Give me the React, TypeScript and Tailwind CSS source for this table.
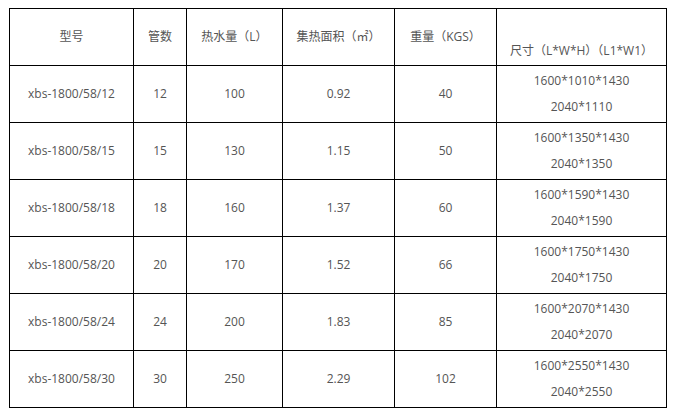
import React from "react";

const headers = ["型号", "管数", "热水量（L）", "集热面积（㎡）", "重量（KGS）", "尺寸（L*W*H）（L1*W1）"];

const rows: [string, string, string, string, string, string, string][] = [
  ["xbs-1800/58/12", "12", "100", "0.92", "40", "1600*1010*1430", "2040*1110"],
  ["xbs-1800/58/15", "15", "130", "1.15", "50", "1600*1350*1430", "2040*1350"],
  ["xbs-1800/58/18", "18", "160", "1.37", "60", "1600*1590*1430", "2040*1590"],
  ["xbs-1800/58/20", "20", "170", "1.52", "66", "1600*1750*1430", "2040*1750"],
  ["xbs-1800/58/24", "24", "200", "1.83", "85", "1600*2070*1430", "2040*2070"],
  ["xbs-1800/58/30", "30", "250", "2.29", "102", "1600*2550*1430", "2040*2550"],
];

const cell =
  "h-[57px] border-r border-b border-black flex items-center justify-center text-center";

export default function App() {
  return (
    <div
      className="w-[673px] h-[412px] bg-white pt-[8px] pl-[9px] text-[12px] text-[#555]"
      style={{ fontFamily: '"Open Sans", "Noto Sans CJK SC", sans-serif' }}
    >
      <div className="grid grid-cols-[124px_53px_96px_112px_102px_170px] w-[658px] border-l border-t border-black">
        {headers.map((h, i) => (
          <div key={i} className={cell}>
            <span className={i === 5 ? "pt-[28px]" : ""}>{h}</span>
          </div>
        ))}
        {rows.map((r, ri) => (
          <React.Fragment key={ri}>
            {r.slice(0, 5).map((c, ci) => (
              <div key={ci} className={cell}>
                {c}
              </div>
            ))}
            <div className={cell + " flex-col leading-[26px]"}>
              <span>{r[5]}</span>
              <span>{r[6]}</span>
            </div>
          </React.Fragment>
        ))}
      </div>
    </div>
  );
}
